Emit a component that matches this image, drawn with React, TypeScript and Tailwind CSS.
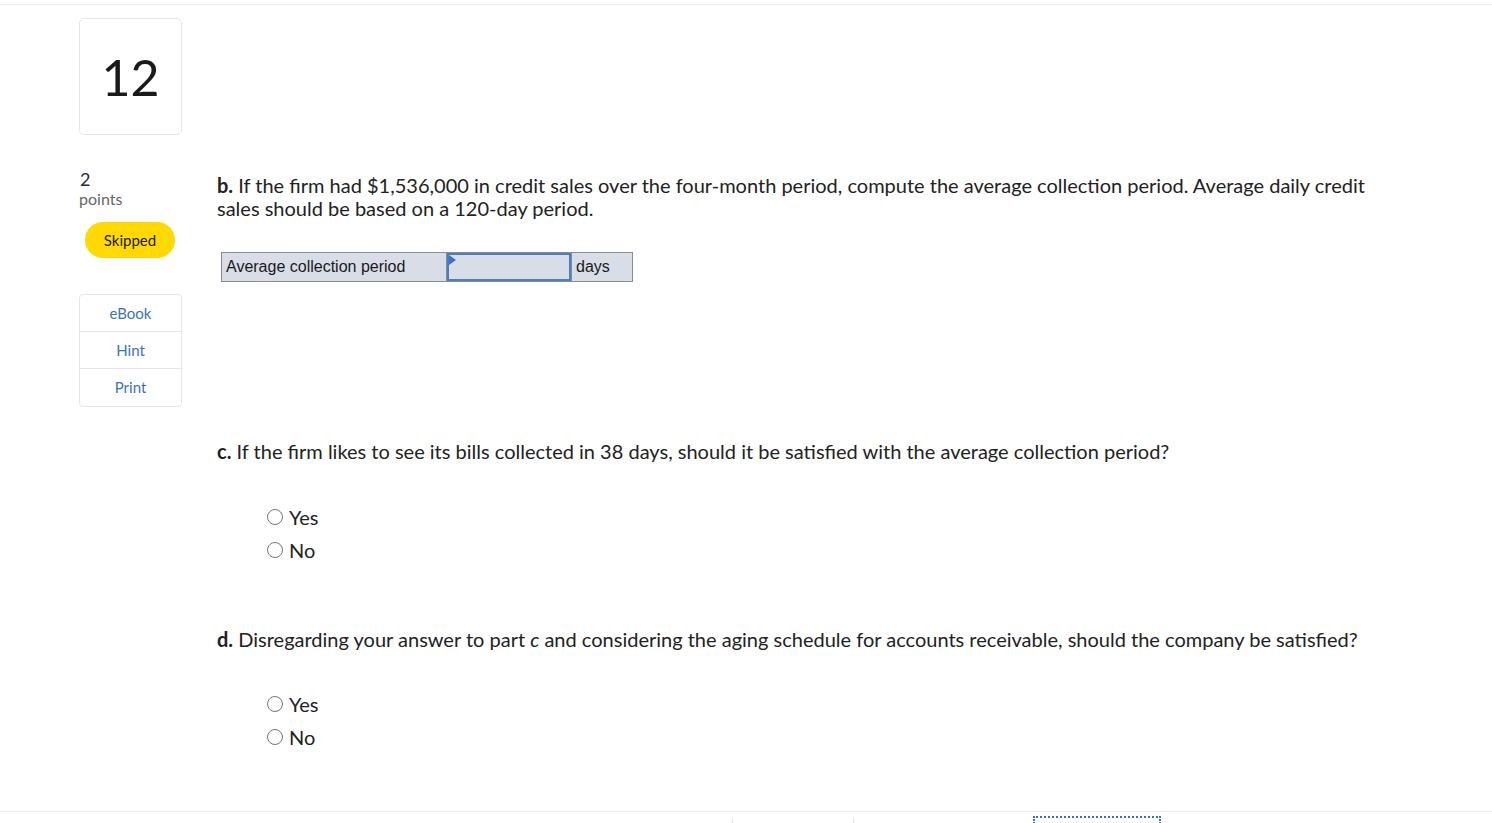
import React from 'react';

function Radio({ label }: { label: string }) {
    return (
        <label className="flex items-center h-[22px] gap-[6px]">
            <span className="w-[16px] h-[16px] rounded-full border border-[#767676] bg-white"></span>
            <span className="text-[20px] text-[#222]">{label}</span>
        </label>
    );
}

export default function App() {
    return (
        <div className="w-[1492px] h-[823px] bg-white overflow-hidden relative font-['Lato',sans-serif] text-[#1f1f1f]">
            <div className="h-[4px]"></div>
            <div className="border-t border-[#ececec]"></div>

            {/* Question number */}
            <div className="ml-[79px] mt-[13px] w-[103px] h-[117px] border border-[#e6e6e6] rounded-[5px] flex items-center justify-center">
                <span className="text-[50px] leading-none text-[#1a1a1a]">12</span>
            </div>

            <div className="flex mt-[34px]">
                {/* Left column */}
                <div className="ml-[79px] w-[103px] flex flex-col">
                    <div className="text-[18px] leading-[20px] text-[#1b2b4a] pl-[1px]">2</div>
                    <div className="text-[16px] leading-[20px] text-[#666]">points</div>
                    <div className="ml-[6px] mt-[13px] w-[90px] h-[36px] rounded-full bg-[#ffd900] flex items-center justify-center text-[15px] text-[#1a1a1a]">
                        Skipped
                    </div>
                    <div className="mt-[36px] border border-[#e6e6e6] rounded-[4px] flex flex-col text-[15px] text-[#3b73b9]">
                        <div className="h-[37px] flex items-center justify-center border-b border-[#e6e6e6]">eBook</div>
                        <div className="h-[37px] flex items-center justify-center border-b border-[#e6e6e6]">Hint</div>
                        <div className="h-[37px] flex items-center justify-center">Print</div>
                    </div>
                </div>

                {/* Question content */}
                <div className="ml-[35px] w-[1160px] pt-[5px] text-[20px] leading-[23px] text-[#222]">
                    <p>
                        <b className="font-bold">b.</b> If the firm had $1,536,000 in credit sales over the four-month period, compute the average collection period. Average daily credit sales should be based on a 120-day period.
                    </p>

                    <div className="ml-[4px] mt-[32px] flex h-[30px] w-[412px] border border-[#8c8c8c] bg-[#d9dde8] font-['Liberation_Sans',Arial,sans-serif] text-[16px] leading-[20px] text-[#1a1a1a]">
                        <div className="w-[225px] flex items-center pl-[4px] border-r border-[#8c8c8c]">Average collection period</div>
                        <div className="w-[124px] relative border-2 border-[#4a7ec2] bg-[#d9dde8]">
                            <span className="absolute left-0 top-0 w-0 h-0 border-t-[5px] border-b-[5px] border-l-[7px] border-t-transparent border-b-transparent border-l-[#3b73c9]"></span>
                        </div>
                        <div className="flex-1 flex items-center pl-[4px] border-l border-[#8c8c8c]">days</div>
                    </div>

                    <p className="mt-[158px]">
                        <b className="font-bold">c.</b> If the firm likes to see its bills collected in 38 days, should it be satisfied with the average collection period?
                    </p>
                    <div className="ml-[50px] mt-[43px] flex flex-col gap-[11px]">
                        <Radio label="Yes" />
                        <Radio label="No" />
                    </div>

                    <p className="mt-[67px]">
                        <b className="font-bold">d.</b> Disregarding your answer to part <i>c</i> and considering the aging schedule for accounts receivable, should the company be satisfied?
                    </p>
                    <div className="ml-[50px] mt-[42px] flex flex-col gap-[11px]">
                        <Radio label="Yes" />
                        <Radio label="No" />
                    </div>
                </div>
            </div>

            {/* Footer edge */}
            <div className="absolute left-0 right-0 top-[811px] border-t border-[#ececec]">
                <div className="flex h-[12px]">
                    <div className="ml-[732px] mt-[6px] w-px h-[6px] bg-[#e2e2e2]"></div>
                    <div className="ml-[120px] mt-[6px] w-px h-[6px] bg-[#e2e2e2]"></div>
                    <div className="ml-[179px] mt-[4px] w-[128px] h-[8px] border-t-2 border-l-2 border-r-2 border-dotted border-[#3b73b9]"></div>
                </div>
            </div>
        </div>
    );
}
